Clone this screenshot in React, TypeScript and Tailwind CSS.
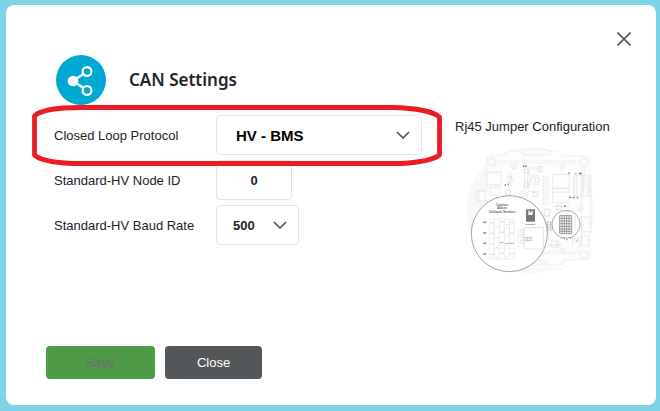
import React from "react";

const baudRates = ["125", "250", "500", "1000"];

const jumperRows = [244, 276, 307, 339];

const Chevron = ({ className }: { className: string }) => (
  <svg
    className={`pointer-events-none absolute top-1/2 -translate-y-1/2 ${className}`}
    width="14"
    height="8"
    viewBox="0 0 14 8"
    fill="none"
    stroke="#555759"
    strokeWidth="1.7"
    aria-hidden="true"
  >
    <path d="M1 1l6 6 6-6" />
  </svg>
);

const ShareIcon = () => (
  <svg width="50" height="50" viewBox="0 0 50 50" aria-hidden="true">
    <circle cx="25" cy="25" r="25" fill="#00a9d1" />
    <g stroke="#fff" strokeWidth="2.2" fill="none">
      <path d="M17 26l10.500-7M17 26l10.500 7" />
      <circle cx="31" cy="16.500" r="4.400" />
      <circle cx="31" cy="35.500" r="4.400" />
    </g>
    <circle cx="17" cy="26" r="5.300" fill="#fff" />
  </svg>
);

const BoardDrawing = () => (
  <svg
    className="ml-3 mt-2"
    width="127"
    height="130"
    viewBox="21 12 381 390"
    fill="none"
    role="img"
    aria-label="Jumper board"
  >
    <circle cx="211" cy="207" r="190" fill="#f8f8f8" />
    {/* board outline */}
    <g stroke="#ececec" strokeWidth="2" fill="#fdfdfd">
      <path d="M80 50q0-6 6-6h50l12-14h30l12 14h60l12-14h30l14 14h78q6 0 6 6v50h4v66h-4v62h4v44h-4v78q0 6-6 6h-70l-14 16h-36l-14-16H86q-6 0-6-6V180H58v-30h22z" />
      <path d="M92 78l18-18h242l22 18v62l-10 10v152l-10 36H230" />
      <path d="M98 82l14-15h236l20 16v55M364 230v70l-15 32H240" />
      <path d="M190 28h78v12h-78zM172 385h32l8-12h50l10 12h34l16-14" />
    </g>
    <g stroke="#e2e2e2" strokeWidth="2" fill="#fff">
      <circle cx="94" cy="62" r="13" />
      <circle cx="94" cy="62" r="8" />
      <circle cx="372" cy="62" r="13" />
      <circle cx="372" cy="62" r="8" />
      <circle cx="372" cy="341" r="14" />
      <circle cx="372" cy="341" r="9" />
      <circle cx="162" cy="76" r="8" />
      <circle cx="307" cy="76" r="8" />
      <circle cx="361" cy="203" r="8" />
      <circle cx="307" cy="329" r="8" />
      <path d="M157 76h10M162 71v10M302 76h10M307 71v10M356 203h10M361 198v10M302 329h10M307 324v10" />
    </g>
    {/* connectors and relays */}
    <g stroke="#e3e3e3" strokeWidth="2">
      <path d="M80 92h44v42H80zM84 96h36M84 130h36M50 150h25v28H50zM90 140h28v22H90z" />
      <path d="M278 100h50v42h-50zM278 142h50v43h-50zM278 154h48M342 104h48v62h-48zM364 104v62M350 104v60M382 104v60" />
      <path d="M364 228h27v44h-27zM364 285h20v30h-20zM345 285l14 20M275 300h22v18h-22z" />
      <circle cx="226" cy="117" r="15" />
      <circle cx="226" cy="117" r="10" />
      <circle cx="190" cy="161" r="12" />
      <circle cx="190" cy="161" r="6" />
    </g>
    <g stroke="#c4c4c4" strokeWidth="2" strokeDasharray="3 4">
      <path d="M143 92v50M149 98v44M155 92v36M194 86v62M202 86v62M208 94v54M250 105v90M256 105v90M264 110v80" />
      <path d="M208 78h34M208 84h34M342 112v52M370 108v58M388 108v58M205 152h30M280 196h50M300 292h44M338 290v30M355 286v30" />
    </g>
    <g stroke="#d4d4d4" strokeWidth="2">
      <path d="M193 84h12v12h-12zM193 123h12v14h-12zM220 154h13v13h-13zM236 76h10v16h-10zM137 148h14v14h-14zM290 193h14v13h-14zM253 205h16v20h-16z" />
      <path d="M226 110v14M150 105l10 16M145 122l10 12M262 312h42M290 298v24" />
    </g>
    <g fill="#777">
      <path d="M189 73h4v5h-4zM196 73h4v5h-4zM357 95h8v5h-8zM134 130h4v4h-4zM143 128h3v4h-3zM328 167h5v4h-5zM338 168h5v4h-5zM350 168h5v4h-5zM346 96h3v4h-3zM325 94h4v4h-4zM312 193h5v4h-5z" />
    </g>
    {/* jumper block on the board */}
    <g stroke="#999" strokeWidth="3">
      <path d="M258 245h22M258 252h22M258 259h22M258 266h22M263 240v36M272 240v32" stroke="#bbb" strokeWidth="2" />
      <circle cx="318" cy="250" r="42" fill="#fff" stroke="#888" strokeWidth="2" />
      <path d="M299 224h36v54h-36zM306 224v54M313 224v54M320 224v54M327 224v54M299 232h36M299 240h36M299 248h36M299 256h36M299 264h36M299 271h36" />
      <path d="M300 212h37M345 225v45" stroke="#c4c4c4" strokeWidth="2" strokeDasharray="4 2" />
      <path d="M310 291h5M318 296h4M327 290h7M347 300h5" />
    </g>
    {/* magnified view */}
    <circle cx="148" cy="278" r="114" fill="#fff" stroke="#777" strokeWidth="2" />
    <g
      fill="#666"
      fontFamily="Liberation Sans, sans-serif"
      fontWeight="bold"
      fontSize="10"
      textAnchor="middle"
    >
      <text x="126" y="195">Caution</text>
      <text x="126" y="205">Abbes</text>
      <text x="126" y="215">Outback Strobes</text>
      <text x="211" y="253" fontSize="7">JUMPER</text>
    </g>
    <path d="M198 205h27v37h-27z" fill="#777" />
    <path d="M205 209h13v13h-13z" fill="#fff" />
    <path d="M209 205h5v9h-5z" fill="#777" />
    <g stroke="#e8e8e8" strokeWidth="2">
      <path d="M88 234h15v120H88zM103 234h15v120h-15zM118 234h15v120h-15zM133 234h15v120h-15zM148 234h15v120h-15z" />
      <path d="M88 262h75M88 292h75M88 323h75" strokeDasharray="3 3" />
      <path d="M192 260h58v64h-58z" stroke="#d8d8d8" />
      <path d="M183 265h9v10h-9zM183 281h9v10h-9zM183 297h9v10h-9z" stroke="#d4d4d4" />
      <path d="M175 267v52" stroke="#c8c8c8" strokeWidth="3" strokeDasharray="3 5" />
      <path d="M196 289h20v10h-20zM202 289v10M209 289v10" stroke="#b4b4b4" />
    </g>
    {jumperRows.map((y) => (
      <g key={y}>
        <path d={`M69 ${y}h10`} stroke="#999" strokeWidth="5" />
        <path
          d={`M91 ${y + 1}h10M121 ${y - 2}h10M151 ${y}h10M109 ${y + 13}h4M138 ${y + 7}h5`}
          stroke="#c4c4c4"
          strokeWidth="2"
        />
      </g>
    ))}
    <path d="M134 307h27M121 305h8" stroke="#999" strokeWidth="2" />
  </svg>
);

const CanSettings = () => {
  return (
    <section className="relative flex flex-1 flex-col rounded-lg bg-white pt-[22px] pr-5 pb-[26px] pl-10">
      <header className="flex items-start justify-between">
        <div className="mt-7 ml-[10px] flex items-center gap-[23px]">
          <ShareIcon />
          <h1 className="font-['Noto_Sans',sans-serif] text-[17px] font-semibold text-[#222229]">
            CAN Settings
          </h1>
        </div>
        <button
          type="button"
          aria-label="Close dialog"
          className="flex h-6 w-6 items-center justify-center"
        >
          <svg width="14" height="14" viewBox="0 0 14 14" stroke="#555759" strokeWidth="1.6">
            <path d="M.500.500l13 13M13.500.500l-13 13" />
          </svg>
        </button>
      </header>

      <div className="mt-[10px] ml-2 flex gap-[33px]">
        <form className="flex flex-col gap-[5px]">
          <div className="flex items-center">
            <label htmlFor="protocol" className="w-[162px] pt-0.5">
              Closed Loop Protocol
            </label>
            <div className="relative">
              <select
                id="protocol"
                defaultValue="HV - BMS"
                className="h-10 w-[206px] appearance-none rounded border border-[#e4e4e4] bg-white pt-0.5 pl-[19px] text-[15px] font-bold text-black"
              >
                <option>HV - BMS</option>
              </select>
              <Chevron className="right-3" />
            </div>
          </div>
          <div className="flex items-center">
            <label htmlFor="node" className="w-[162px] pt-0.5">
              Standard-HV Node ID
            </label>
            <input
              id="node"
              type="text"
              defaultValue="0"
              className="h-10 w-[76px] rounded border border-[#e4e4e4] text-center font-bold"
            />
          </div>
          <div className="flex items-center">
            <label htmlFor="baud" className="w-[162px] pt-0.5">
              Standard-HV Baud Rate
            </label>
            <div className="relative">
              <select
                id="baud"
                defaultValue="500"
                className="h-10 w-[83px] appearance-none rounded border border-[#e4e4e4] bg-white pt-0.5 pl-4 font-bold"
              >
                {baudRates.map((rate) => (
                  <option key={rate}>{rate}</option>
                ))}
              </select>
              <Chevron className="right-3" />
            </div>
          </div>
        </form>

        <div>
          <h2 className="pt-0.5 leading-5 whitespace-nowrap">Rj45 Jumper Configuration</h2>
          <BoardDrawing />
        </div>
      </div>

      <footer className="mt-auto flex gap-[10px]">
        <button
          type="button"
          disabled
          className="h-[33px] w-[109px] rounded bg-[#4e9a47] text-[#6c6f6c]"
        >
          Save
        </button>
        <button type="button" className="h-[33px] w-[97px] rounded bg-[#54575a] text-white">
          Close
        </button>
      </footer>

      {/* hand-drawn highlight round the protocol row */}
      <svg
        className="pointer-events-none absolute top-[99px] left-[25px]"
        width="412"
        height="64"
        viewBox="0 0 412 64"
        fill="none"
        stroke="#ed1c24"
        strokeWidth="4.800"
        strokeLinejoin="round"
        aria-hidden="true"
      >
        <path d="M3.500 12C8 7 24 3.500 50 3.500H361C386 4 403 8 408.500 13V51C402 56 387 58.500 371 59.500H41C22 58.500 8 55.500 3.500 51Z" />
      </svg>
    </section>
  );
};

const App = () => {
  return (
    <main className="flex min-h-screen bg-[#7dd3e6] pt-[5px] pr-1 pb-[6px] pl-[6px] font-['Liberation_Sans',Arial,sans-serif] text-[13px] text-[#222229]">
      <CanSettings />
    </main>
  );
};

export default App;
